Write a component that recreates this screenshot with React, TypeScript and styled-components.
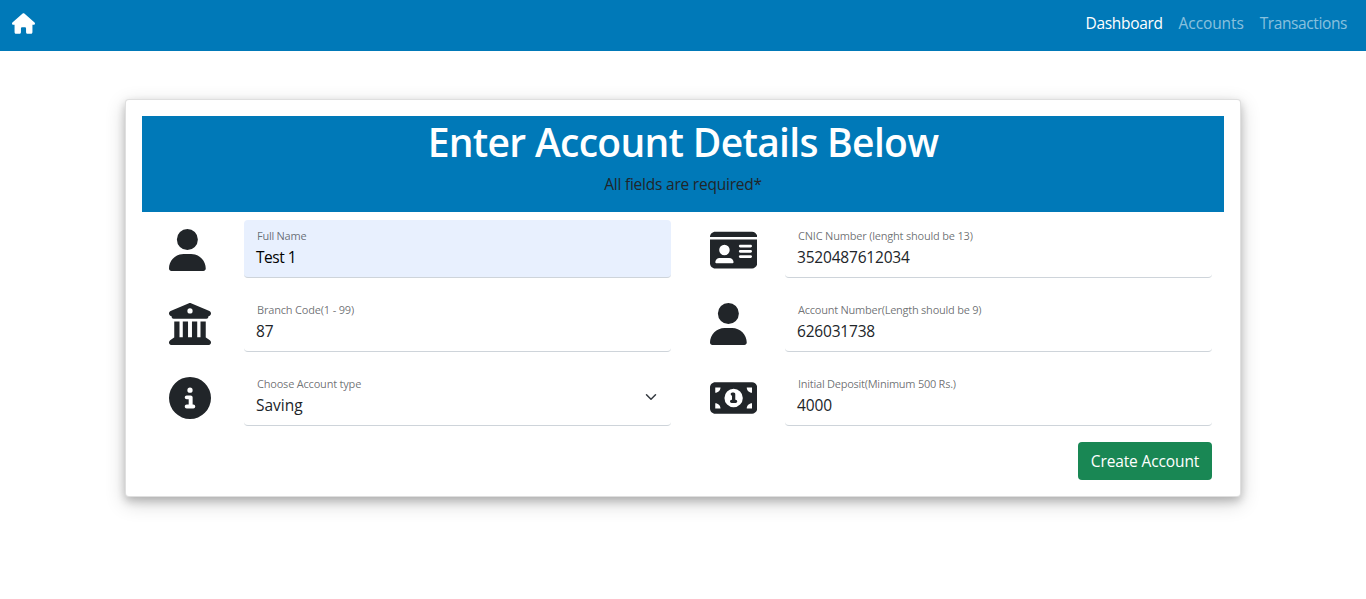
import React from 'react';
import styled, { createGlobalStyle } from 'styled-components';
import { FaHouse, FaUser, FaBuildingColumns, FaCircleInfo, FaIdCard, FaMoneyBill1 } from 'react-icons/fa6';

const GlobalStyle = createGlobalStyle`
  *, *::before, *::after { box-sizing: border-box; }
  body {
    margin: 0;
    background: #fff;
    color: #212529;
    font: 400 15.5px/24px 'Open Sans', 'Noto Sans', sans-serif;
  }
`;

const Page = styled.div`
  min-height: 100vh;
`;

const Navbar = styled.nav`
  display: flex;
  align-items: center;
  justify-content: space-between;
  height: 51px;
  padding: 0 19px 4px 12px;
  background: #0079b8;
`;

const Brand = styled.a`
  display: flex;
  color: #fff;
  svg { width: 23px; height: 21px; }
`;

const NavLinks = styled.div`
  display: flex;
  gap: 16px;
  padding-bottom: 1px;
`;

const NavLink = styled.a<{ $active?: boolean; $spacing: number }>`
  color: ${p => (p.$active ? '#fff' : 'rgba(255, 255, 255, 0.55)')};
  letter-spacing: ${p => p.$spacing}px;
  white-space: nowrap;
`;

const Card = styled.main`
  width: 1116px;
  margin: 48px auto 0;
  padding: 16px;
  border: 1px solid rgba(0, 0, 0, 0.125);
  border-radius: 4px;
  background: #fff;
  box-shadow: 0 4px 8px 0 rgba(0, 0, 0, 0.2), 0 6px 20px 0 rgba(0, 0, 0, 0.19);
`;

const Banner = styled.header`
  height: 96px;
  background: #0079b8;
  text-align: center;
`;

const Title = styled.h1`
  height: 48px;
  margin: 0 0 8px;
  color: #fff;
  font-size: 39px;
  font-weight: 600;
  line-height: 52px;
  letter-spacing: -0.7px;
`;

const Note = styled.p`
  margin: 0;
  letter-spacing: -0.22px;
`;

const Fields = styled.form`
  display: grid;
  grid-template-columns: 1fr 1fr;
  row-gap: 16px;
  padding-top: 8px;
`;

const Field = styled.div`
  display: grid;
  grid-template-columns: 75px 1fr;
  height: 58px;
  padding: 0 12px 0 27px;
`;

const IconCell = styled.span<{ $width: number }>`
  display: flex;
  align-items: center;
  padding-top: 2px;
  svg { width: ${p => p.$width}px; height: 42px; }
`;

const Control = styled.label<{ $filled?: boolean }>`
  position: relative;
  display: flex;
  flex-direction: column;
  padding: 7px 12px 0;
  border-bottom: 1px solid #ced4da;
  border-radius: 4px;
  background: ${p => (p.$filled ? '#e8f0fe' : '#fff')};
`;

const Caption = styled.span<{ $spacing: number }>`
  align-self: flex-start;
  padding-left: 1px;
  font-size: 11px;
  line-height: 18px;
  color: rgba(33, 37, 41, 0.65);
  letter-spacing: ${p => p.$spacing}px;
  white-space: nowrap;
`;

const Value = styled.span<{ $spacing: number; $dark?: boolean }>`
  align-self: flex-start;
  color: ${p => (p.$dark ? '#000' : '#212529')};
  letter-spacing: ${p => p.$spacing}px;
  white-space: nowrap;
`;

const Chevron = styled.svg`
  position: absolute;
  right: 12px;
  top: 23px;
  width: 16px;
  height: 12px;
`;

const Actions = styled.div`
  grid-column: 1 / -1;
  display: flex;
  justify-content: flex-end;
  padding-right: 12px;
`;

const SubmitButton = styled.button`
  width: 134px;
  height: 38px;
  padding: 0;
  border: 0;
  border-radius: 4px;
  background: #198754;
  color: #fff;
  font: inherit;
  letter-spacing: -0.13px;
  white-space: nowrap;
`;

const fields = [
  { icon: FaUser, iconWidth: 36.75, label: 'Full Name', value: 'Test 1', labelSpacing: -0.25, valueSpacing: -0.5, filled: true },
  { icon: FaIdCard, iconWidth: 47.25, label: 'CNIC Number (lenght should be 13)', value: '3520487612034', labelSpacing: -0.2, valueSpacing: -0.2 },
  { icon: FaBuildingColumns, iconWidth: 42, label: 'Branch Code(1 - 99)', value: '87', labelSpacing: -0.18, valueSpacing: -0.2 },
  { icon: FaUser, iconWidth: 36.75, label: 'Account Number(Length should be 9)', value: '626031738', labelSpacing: -0.24, valueSpacing: -0.2 },
  { icon: FaCircleInfo, iconWidth: 42, label: 'Choose Account type', value: 'Saving', labelSpacing: -0.2, valueSpacing: 0, select: true },
  { icon: FaMoneyBill1, iconWidth: 47.25, label: 'Initial Deposit(Minimum 500 Rs.)', value: '4000', labelSpacing: -0.25, valueSpacing: -0.1 },
];

export default function App() {
  return (
    <Page>
      <GlobalStyle />
      <Navbar>
        <Brand href="#"><FaHouse /></Brand>
        <NavLinks>
          <NavLink $active $spacing={-0.33}>Dashboard</NavLink>
          <NavLink $spacing={-0.1}>Accounts</NavLink>
          <NavLink $spacing={-0.4}>Transactions</NavLink>
        </NavLinks>
      </Navbar>
      <Card>
        <Banner>
          <Title>Enter Account Details Below</Title>
          <Note>All fields are required*</Note>
        </Banner>
        <Fields>
          {fields.map(({ icon: Icon, ...f }) => (
            <Field key={f.label}>
              <IconCell $width={f.iconWidth}><Icon /></IconCell>
              <Control $filled={f.filled}>
                <Caption $spacing={f.labelSpacing}>{f.label}</Caption>
                <Value $spacing={f.valueSpacing} $dark={f.filled}>{f.value}</Value>
                {f.select && (
                  <Chevron viewBox="0 0 16 16" fill="none" stroke="#343a40" strokeWidth="2" strokeLinecap="round" strokeLinejoin="round">
                    <path d="m2 5 6 6 6-6" />
                  </Chevron>
                )}
              </Control>
            </Field>
          ))}
          <Actions><SubmitButton type="button">Create Account</SubmitButton></Actions>
        </Fields>
      </Card>
    </Page>
  );
}
